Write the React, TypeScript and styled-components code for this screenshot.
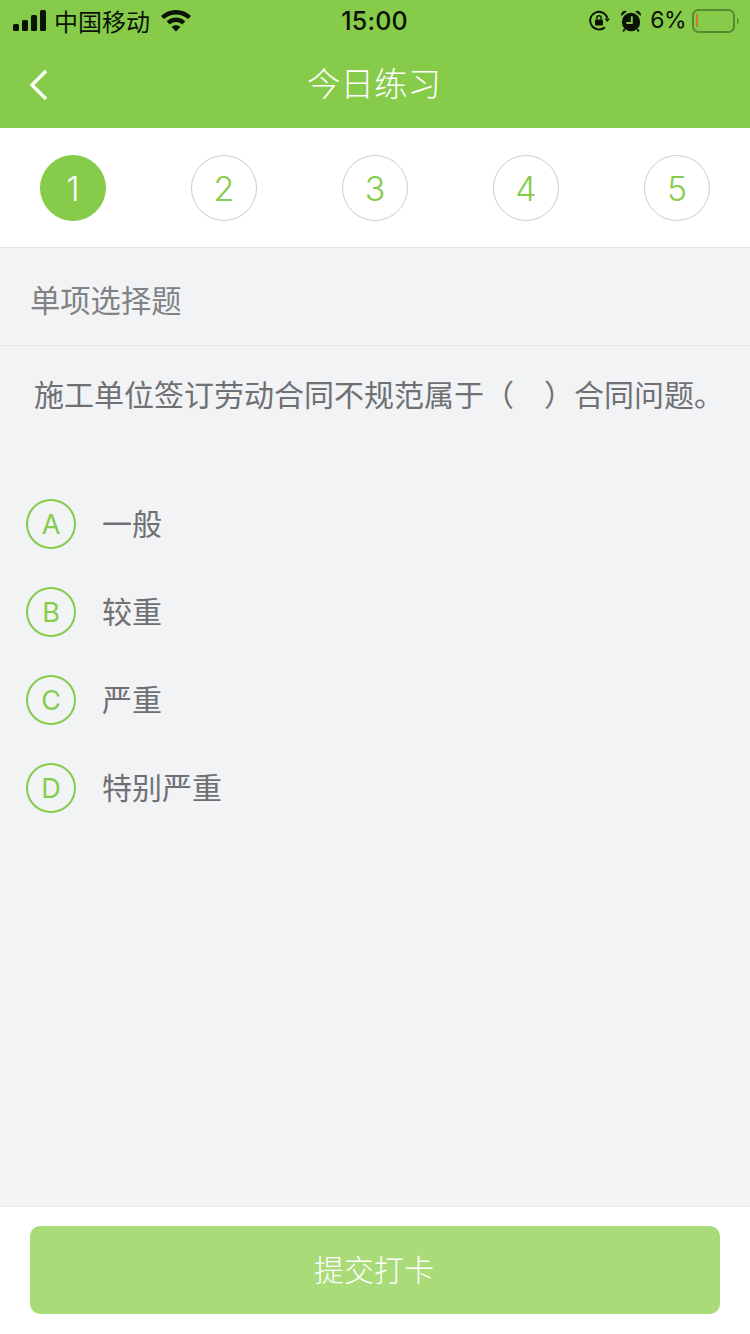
import styled, { createGlobalStyle } from 'styled-components';

const GlobalStyle = createGlobalStyle`
  html, body {
    margin: 0;
    padding: 0;
    background: #f2f3f5;
  }
  body {
    font-family: 'Inter', 'Noto Sans CJK SC', sans-serif;
  }
`;

const Page = styled.div`
  width: 750px;
  height: 1334px;
  display: flex;
  flex-direction: column;
  overflow: hidden;
  background: #f2f3f5;
`;

const Header = styled.header`
  height: 128px;
  flex-shrink: 0;
  background: #86cc4a;
  display: flex;
  flex-direction: column;
`;

const StatusBar = styled.div`
  height: 40px;
  display: grid;
  grid-template-columns: 1fr auto 1fr;
  align-items: center;
  padding: 0 11px 0 13px;
  color: #0b1206;
`;

const StatusLeft = styled.div`
  display: flex;
  align-items: center;
`;

const StatusRight = styled.div`
  display: flex;
  align-items: center;
  justify-content: flex-end;
`;

const Carrier = styled.span`
  font-family: 'Noto Sans CJK SC', sans-serif;
  font-size: 24px;
  line-height: 40px;
  margin: 0 11px 0 8px;
`;

const Clock = styled.span`
  font-size: 25px;
  font-weight: 500;
  letter-spacing: 0.2px;
  line-height: 40px;
  margin-right: 3px;
`;

const Percent = styled.span`
  font-size: 23px;
  letter-spacing: -0.5px;
  line-height: 41px;
  margin: 0 6px 0 9px;
`;

const StatusIcon = styled.svg<{ $gap?: number }>`
  display: block;
  flex-shrink: 0;
  margin-left: ${(props) => props.$gap ?? 0}px;
`;

const NavBar = styled.div`
  flex: 1;
  position: relative;
  display: flex;
  justify-content: center;
  padding-right: 2px;
`;

const BackIcon = styled.svg`
  position: absolute;
  left: 29px;
  top: 29px;
`;

const Title = styled.h1`
  margin: 0;
  font-family: 'Noto Sans CJK SC', sans-serif;
  font-size: 33.5px;
  font-weight: 300;
  color: #ffffff;
  line-height: 84px;
`;

const Stepper = styled.div`
  height: 92px;
  flex-shrink: 0;
  background: #ffffff;
  border-bottom: 1px solid #e4e5e7;
  display: flex;
  align-items: flex-start;
  justify-content: space-between;
  padding: 27px 40px 0;
`;

const Step = styled.div<{ $active?: boolean }>`
  width: 66px;
  height: 66px;
  box-sizing: border-box;
  border-radius: 50%;
  border: 1px solid ${(props) => (props.$active ? '#86cc4a' : '#cbcccd')};
  background: ${(props) => (props.$active ? '#86cc4a' : '#ffffff')};
  color: ${(props) => (props.$active ? '#ffffff' : '#86cc4a')};
  display: flex;
  align-items: center;
  justify-content: center;
  font-size: 34px;
  font-weight: 300;
`;

const SectionLabel = styled.div`
  height: 98px;
  flex-shrink: 0;
  box-sizing: border-box;
  border-bottom: 1px solid #e6e7e9;
  padding: 4px 0 0 30px;
  display: flex;
  align-items: center;
  font-family: 'Noto Sans CJK SC', sans-serif;
  font-size: 30.3px;
  font-weight: 400;
  color: #808285;
`;

const Question = styled.p`
  margin: 0;
  padding: 25px 0 0 34px;
  font-family: 'Noto Sans CJK SC', sans-serif;
  font-size: 30px;
  font-weight: 400;
  line-height: 45px;
  color: #6e7074;
  white-space: nowrap;
`;

const OptionList = styled.div`
  flex: 1;
  display: flex;
  flex-direction: column;
  gap: 38px;
  padding: 83px 0 0 26px;
`;

const Option = styled.div`
  display: flex;
  align-items: center;
  gap: 26px;
`;

const OptionMark = styled.div`
  width: 50px;
  height: 50px;
  box-sizing: border-box;
  border: 2px solid #86cc4a;
  border-radius: 50%;
  color: #86cc4a;
  display: flex;
  align-items: center;
  justify-content: center;
  font-size: 27px;
  font-weight: 400;
`;

const OptionText = styled.span`
  font-family: 'Noto Sans CJK SC', sans-serif;
  font-size: 30px;
  font-weight: 400;
  color: #6e7074;
  padding-bottom: 4px;
`;

const Footer = styled.footer`
  height: 128px;
  flex-shrink: 0;
  box-sizing: border-box;
  background: #ffffff;
  border-top: 1px solid #e8e9eb;
  padding: 19px 30px 0;
`;

const SubmitButton = styled.button`
  display: block;
  width: 100%;
  height: 88px;
  border: none;
  border-radius: 10px;
  background: #a9dc78;
  color: #ffffff;
  font-family: 'Noto Sans CJK SC', sans-serif;
  font-size: 30px;
  font-weight: 300;
  padding: 0 2px 4px 0;
`;

const steps = ['1', '2', '3', '4', '5'];

const options = [
  { mark: 'A', text: '一般' },
  { mark: 'B', text: '较重' },
  { mark: 'C', text: '严重' },
  { mark: 'D', text: '特别严重' },
];

function App() {
  return (
    <Page>
      <GlobalStyle />
      <Header>
        <StatusBar>
          <StatusLeft>
            <StatusIcon width="33" height="22" viewBox="0 0 33 22" fill="currentColor">
              <rect x="0" y="14" width="6" height="7" rx="1.5" />
              <rect x="9" y="10" width="6" height="11" rx="1.5" />
              <rect x="18" y="5" width="6" height="16" rx="1.5" />
              <rect x="27" y="0" width="6" height="21" rx="1.5" />
            </StatusIcon>
            <Carrier>中国移动</Carrier>
            <StatusIcon width="30" height="22" viewBox="0 0 30 22" fill="currentColor">
              <path d="M15 0C9.2 0 4 2.2 0 5.9l3 3.2C6.1 6.2 10.3 4.4 15 4.4s8.9 1.8 12 4.7l3-3.2C26 2.2 20.8 0 15 0z" />
              <path d="M15 7.6c-3.6 0-6.9 1.4-9.3 3.7l3 3.2c1.6-1.6 3.9-2.5 6.3-2.5s4.7.9 6.3 2.5l3-3.2C21.9 9 18.6 7.6 15 7.6z" />
              <path d="M15 15.2c-1.7 0-3.2.6-4.4 1.7L15 21.6l4.4-4.7c-1.2-1.1-2.7-1.7-4.4-1.7z" />
            </StatusIcon>
          </StatusLeft>
          <Clock>15:00</Clock>
          <StatusRight>
            <StatusIcon width="21" height="21" viewBox="0 0 21 21">
              <path d="M15.9 17.2A8.8 8.8 0 1 1 18.4 8" fill="none" stroke="currentColor" strokeWidth="1.9" />
              <path d="M15.6 8.4h5.4l-2.7 3.6z" fill="currentColor" />
              <rect x="6" y="9.4" width="8" height="6" rx="1" fill="currentColor" />
              <path d="M7.9 9.6V7.8a2.1 2.1 0 0 1 4.2 0v1.8" fill="none" stroke="currentColor" strokeWidth="1.4" />
            </StatusIcon>
            <StatusIcon $gap={11} width="20" height="22" viewBox="0 0 20 22">
              <circle cx="10" cy="12" r="9.2" fill="currentColor" />
              <path d="M0.4 6a3.8 3.8 0 0 1 5.4-4.6zM19.6 6a3.8 3.8 0 0 0-5.4-4.6z" fill="currentColor" />
              <path d="M3.8 19l-1.6 2.4M16.2 19l1.6 2.4" stroke="currentColor" strokeWidth="1.8" />
              <path d="M10.8 6.2v6.8H5.4" fill="none" stroke="#86cc4a" strokeWidth="1.9" />
            </StatusIcon>
            <Percent>6%</Percent>
            <StatusIcon width="47" height="24" viewBox="0 0 47 24">
              <rect x="1" y="1" width="41" height="22" rx="5.5" fill="none" stroke="#558a30" strokeWidth="2" />
              <rect x="4" y="5" width="2" height="13" fill="#d0772f" />
              <path d="M45 9v6c1 0 1.6-1.4 1.6-3s-.6-3-1.6-3z" fill="#558a30" />
            </StatusIcon>
          </StatusRight>
        </StatusBar>
        <NavBar>
          <BackIcon width="20" height="32" viewBox="0 0 20 32">
            <path d="M17 2L3 16l14 14" fill="none" stroke="#ffffff" strokeWidth="3.4" />
          </BackIcon>
          <Title>今日练习</Title>
        </NavBar>
      </Header>
      <Stepper>
        {steps.map((step, index) => (
          <Step key={step} $active={index === 0}>
            {step}
          </Step>
        ))}
      </Stepper>
      <SectionLabel>单项选择题</SectionLabel>
      <Question>施工单位签订劳动合同不规范属于（　）合同问题。</Question>
      <OptionList>
        {options.map((option) => (
          <Option key={option.mark}>
            <OptionMark>{option.mark}</OptionMark>
            <OptionText>{option.text}</OptionText>
          </Option>
        ))}
      </OptionList>
      <Footer>
        <SubmitButton>提交打卡</SubmitButton>
      </Footer>
    </Page>
  );
}

export default App;
